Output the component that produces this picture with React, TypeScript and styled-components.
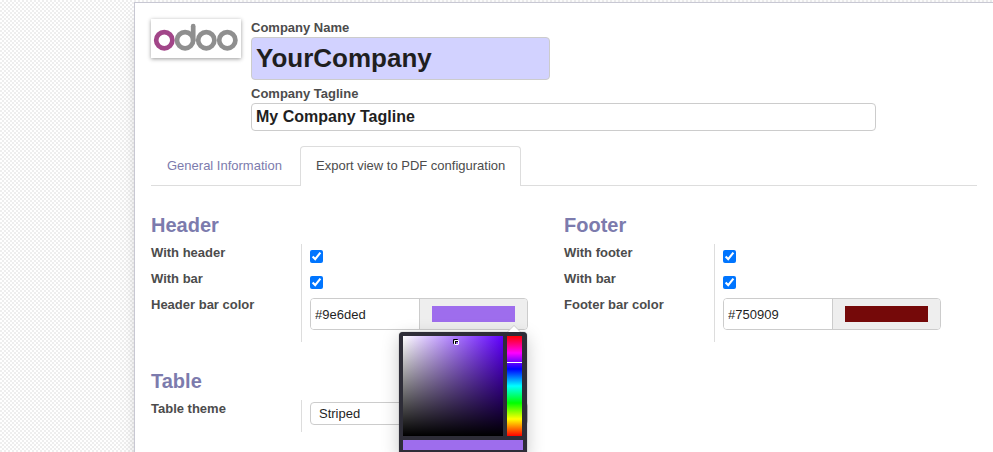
import React from "react";
import styled, { createGlobalStyle } from "styled-components";

const GlobalStyle = createGlobalStyle`
  *, *::before, *::after { box-sizing: border-box; }
  html, body { margin: 0; height: 452px; overflow: hidden; }
  body {
    font: 13px/20px "Liberation Sans", Arial, sans-serif;
    color: #4c4c4c;
    background: #fff conic-gradient(#eee 25%, #fff 0 50%, #eee 0 75%, #fff 0) 0 0 / 4px 4px;
  }
`;

const Page = styled.div`
  height: 452px;
  padding: 2px 0 0 134px;
  overflow: hidden;
`;

const Sheet = styled.main`
  width: 960px;
  height: 700px;
  padding: 16px;
  background: #fff;
  border: 1px solid #c8c8d3;
  box-shadow: 0 5px 20px -15px #000;
`;

const Intro = styled.header`
  display: flex;
  gap: 10px;
  height: 127px;
`;

const LogoFrame = styled.div`
  width: 90px;
  height: 39px;
  background: #fff;
  box-shadow: 0 1px 4px rgba(0, 0, 0, 0.4);
  svg { display: block; }
`;

const Fields = styled.div`
  display: flex;
  flex-direction: column;
`;

const FieldLabel = styled.label<{ $gap?: number }>`
  height: 18px;
  margin-top: ${(p) => p.$gap ?? 0}px;
  line-height: 18px;
  font-weight: bold;
`;

const TextInput = styled.input<{ $large?: boolean }>`
  width: ${(p) => (p.$large ? 299 : 625)}px;
  height: ${(p) => (p.$large ? 43 : 28)}px;
  padding: 0 4px;
  border: 1px solid #ccc;
  border-radius: 4px;
  background: ${(p) => (p.$large ? "#d2d2ff" : "#fff")};
  color: #1f1f1f;
  font: bold ${(p) => (p.$large ? 26 : 16)}px "Liberation Sans", Arial, sans-serif;
  outline: none;
`;

const Tabs = styled.nav`
  display: flex;
  width: 826px;
  height: 40px;
  box-shadow: inset 0 -1px #ddd;
`;

const Tab = styled.a<{ $active?: boolean }>`
  width: ${(p) => (p.$active ? 221 : 149)}px;
  padding-left: 15px;
  border: 1px solid ${(p) => (p.$active ? "#ddd" : "transparent")};
  border-bottom: 0;
  border-radius: 4px 4px 0 0;
  background: ${(p) => (p.$active ? "#fff" : "transparent")};
  color: ${(p) => (p.$active ? "#4c4c4c" : "#7c7bad")};
  line-height: 38px;
  white-space: nowrap;
`;

const Groups = styled.div`
  display: grid;
  grid-template-columns: 413px 413px;
  grid-template-rows: 156px 100px;
  padding-top: 27px;
`;

const Title = styled.h2`
  margin: 0;
  height: 31px;
  color: #7c7bad;
  font-size: 20px;
  line-height: 24px;
`;

const GroupBody = styled.div<{ $height: number }>`
  display: grid;
  grid-template-columns: 150px 227px;
  height: ${(p) => p.$height}px;
`;

const Labels = styled.div`
  display: flex;
  flex-direction: column;
`;

const RowLabel = styled.label`
  height: 26px;
  line-height: 17px;
  font-weight: bold;
`;

const Values = styled.div`
  display: flex;
  flex-direction: column;
  padding-left: 8px;
  border-left: 1px solid #ddd;
`;

const CheckCell = styled.div`
  height: 26px;
  padding-top: 6px;
`;

const Checkbox = styled.input`
  display: block;
  width: 13px;
  height: 13px;
  margin: 0;
  accent-color: #0075ff;
`;

const ColorField = styled.div`
  position: relative;
  display: flex;
  width: 218px;
  height: 32px;
  margin-top: 2px;
  border: 1px solid #ccc;
  border-radius: 4px;
`;

const ColorCode = styled.input`
  width: 109px;
  padding: 0 4px;
  border: 0;
  border-right: 1px solid #ccc;
  border-radius: 3px 0 0 3px;
  color: #1f1f1f;
  font: 13px "Liberation Sans", Arial, sans-serif;
  outline: none;
`;

const ColorAddon = styled.div`
  flex: 1;
  padding: 7px 12px;
  border-radius: 0 3px 3px 0;
  background: #eee;
`;

const Swatch = styled.div<{ $color: string }>`
  height: 16px;
  background: ${(p) => p.$color};
`;

const Select = styled.div`
  width: 218px;
  height: 23px;
  margin-top: 2px;
  padding-left: 8px;
  border: 1px solid #ccc;
  border-radius: 4px;
  color: #1f1f1f;
  line-height: 22px;
`;

const Picker = styled.div`
  position: absolute;
  z-index: 2;
  top: 33px;
  left: 88px;
  display: grid;
  grid-template-columns: 100px 15px;
  grid-template-rows: 100px 10px;
  gap: 4px;
  width: 128px;
  height: 124px;
  padding: 4px;
  border-radius: 4px;
  background: #2e2d38;
  box-shadow: 0 5px 18px rgba(0, 0, 0, 0.22), 0 0 1px rgba(0, 0, 0, 0.6);

  &::before {
    content: "";
    position: absolute;
    top: -7px;
    right: 6px;
    border: solid transparent;
    border-width: 0 7px 7px;
    border-bottom-color: #ccc;
  }
  &::after {
    content: "";
    position: absolute;
    top: -6px;
    right: 7px;
    border: solid transparent;
    border-width: 0 6px 6px;
    border-bottom-color: #fff;
  }
`;

const Saturation = styled.div`
  position: relative;
  background: linear-gradient(to top, #000, transparent), linear-gradient(to right, #fff, #6000ff);
`;

const Handle = styled.i`
  position: absolute;
  top: 4px;
  left: 51px;
  width: 5px;
  height: 5px;
  border: 1px solid #fff;
  border-radius: 1px;
  box-shadow: -1px -1px #000, inset 1px 1px #000;
`;

const Hue = styled.div`
  position: relative;
  background: linear-gradient(#f00, #f0f 17%, #00f 33%, #0ff 50%, #0f0 67%, #ff0 83%, #f00);
`;

const HueLine = styled.i`
  position: absolute;
  top: 26px;
  left: 0;
  width: 100%;
  height: 1px;
  background: #fff;
`;

const Preview = styled.div`
  grid-column: 1 / -1;
  width: 120px;
  background: #9e6ded;
`;

function OdooLogo() {
  return (
    <svg width="90" height="39" viewBox="0 0 90 39" fill="none" strokeWidth="4.7">
      <circle cx="13.3" cy="21.2" r="8.1" stroke="#a24689" />
      <g stroke="#8f8f8f">
        <circle cx="34.1" cy="21.2" r="8.1" />
        <path d="M42.2 21.5V7.2" strokeLinecap="round" />
        <circle cx="55.3" cy="21.2" r="8.1" />
        <circle cx="76.3" cy="21.2" r="8.1" />
      </g>
    </svg>
  );
}

function ColorPicker() {
  return (
    <Picker>
      <Saturation><Handle /></Saturation>
      <Hue><HueLine /></Hue>
      <Preview />
    </Picker>
  );
}

function BarGroup({ name, color, open }: { name: string; color: string; open?: boolean }) {
  return (
    <section>
      <Title>{name}</Title>
      <GroupBody $height={98}>
        <Labels>
          <RowLabel>With {name.toLowerCase()}</RowLabel>
          <RowLabel>With bar</RowLabel>
          <RowLabel>{name} bar color</RowLabel>
        </Labels>
        <Values>
          <CheckCell><Checkbox type="checkbox" defaultChecked /></CheckCell>
          <CheckCell><Checkbox type="checkbox" defaultChecked /></CheckCell>
          <ColorField>
            <ColorCode defaultValue={color} />
            <ColorAddon><Swatch $color={color} /></ColorAddon>
            {open && <ColorPicker />}
          </ColorField>
        </Values>
      </GroupBody>
    </section>
  );
}

export default function App() {
  return (
    <Page>
      <GlobalStyle />
      <Sheet>
        <Intro>
          <LogoFrame><OdooLogo /></LogoFrame>
          <Fields>
            <FieldLabel>Company Name</FieldLabel>
            <TextInput $large defaultValue="YourCompany" />
            <FieldLabel $gap={5}>Company Tagline</FieldLabel>
            <TextInput defaultValue="My Company Tagline" />
          </Fields>
        </Intro>
        <Tabs>
          <Tab>General Information</Tab>
          <Tab $active>Export view to PDF configuration</Tab>
        </Tabs>
        <Groups>
          <BarGroup name="Header" color="#9e6ded" open />
          <BarGroup name="Footer" color="#750909" />
          <section>
            <Title>Table</Title>
            <GroupBody $height={32}>
              <Labels><RowLabel>Table theme</RowLabel></Labels>
              <Values><Select>Striped</Select></Values>
            </GroupBody>
          </section>
        </Groups>
      </Sheet>
    </Page>
  );
}
